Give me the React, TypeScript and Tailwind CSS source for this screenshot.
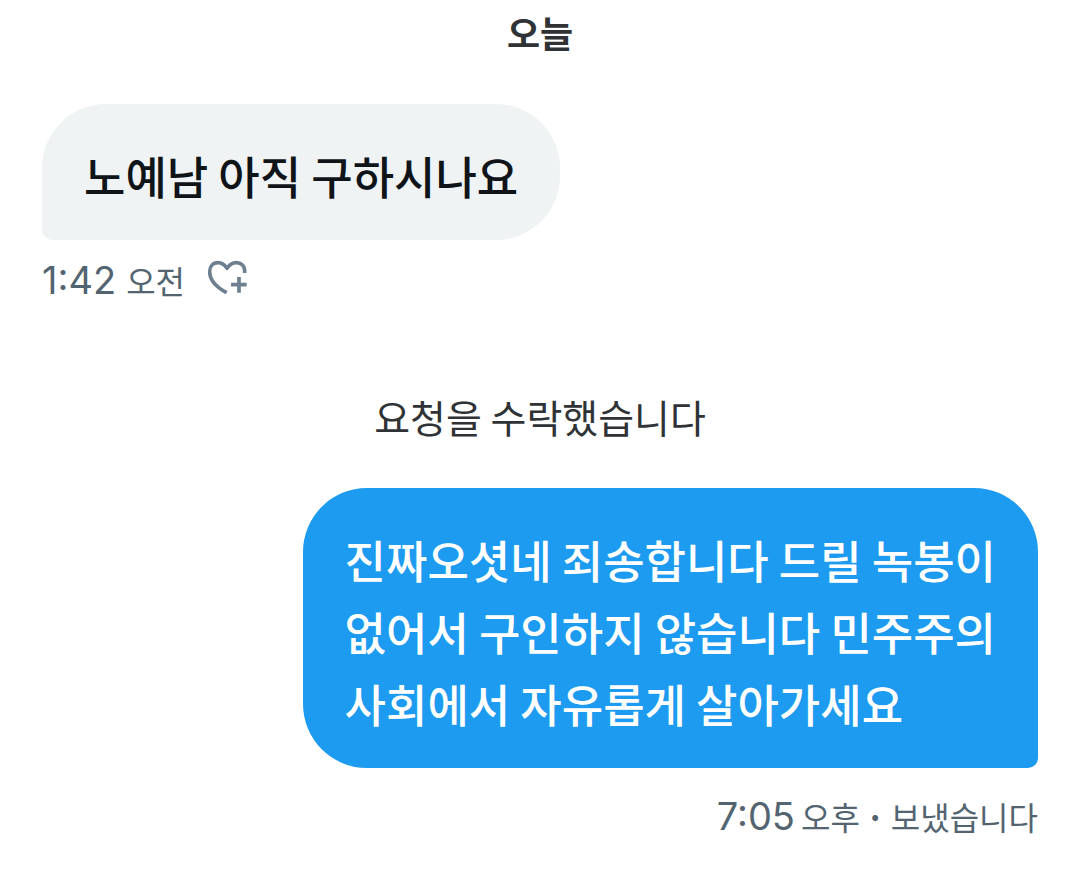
import clsx from 'clsx';

interface Message {
  id: string;
  text: string;
  time: string;
  period: string;
  status?: string;
  isMine: boolean;
}

const received: Message = {
  id: '1',
  text: '노예남 아직 구하시나요',
  time: '1:42',
  period: '오전',
  isMine: false,
};

const sent: Message = {
  id: '2',
  text: '진짜오셧네 죄송합니다 드릴 녹봉이\n없어서 구인하지 않습니다 민주주의\n사회에서 자유롭게 살아가세요',
  time: '7:05',
  period: '오후',
  status: '보냈습니다',
  isMine: true,
};

function HeartPlusIcon() {
  return (
    <svg viewBox="0 0 120 102" className="h-[34px] w-10" fill="none" stroke="currentColor" strokeWidth="11" aria-hidden="true">
      <path d="M113 39V33C113 17 102 8 88 8C76 8 67 14 60 25C53 14 44 8 33 8C18 8 8 19 8 35C8 60 26 80 59 98" strokeLinejoin="round" />
      <path d="M96 51v47M72 74h47" />
    </svg>
  );
}

function MessageItem({ message }: { message: Message }) {
  return (
    <div className={clsx('flex flex-col', message.isMine ? 'items-end' : 'items-start')}>
      <p
        className={clsx(
          'rounded-[64px] px-[42px] pt-9 pb-7 text-[45px] leading-[72px] font-medium whitespace-pre-line break-keep',
          message.isMine
            ? 'rounded-br-[10px] bg-[#1d9bf0] text-white'
            : 'rounded-bl-[10px] bg-[#eff3f4] text-[#0f1419]'
        )}
      >
        {message.text}
      </p>
      <div className={clsx('flex items-center leading-[56px] text-[#536471]', message.isMine ? 'mt-5 gap-1.5' : 'mt-3 gap-2.5')}>
        <span className="font-[Inter,sans-serif] text-[38px]">{message.time}</span>
        <span className="text-[32px]">{message.period}</span>
        {message.status && (
          <>
            <span className="text-[32px] font-bold">·</span>
            <span className="text-[32px]">{message.status}</span>
          </>
        )}
        {!message.isMine && (
          <button type="button" aria-label="반응 추가" className="ml-3 pb-1.5 text-[#6e8090]">
            <HeartPlusIcon />
          </button>
        )}
      </div>
    </div>
  );
}

export default function App() {
  return (
    <main className="min-h-screen bg-white pt-1 pr-[38px] pb-10 pl-[42px] font-['Noto_Sans_CJK_KR',sans-serif]">
      <h1 className="text-center text-[36px] leading-[56px] font-bold text-[#2f3336]">오늘</h1>
      <div className="mt-11">
        <MessageItem message={received} />
      </div>
      <p className="mt-20 mb-11 text-center text-[39px] leading-[56px] text-[#2f3336]">요청을 수락했습니다</p>
      <MessageItem message={sent} />
    </main>
  );
}
